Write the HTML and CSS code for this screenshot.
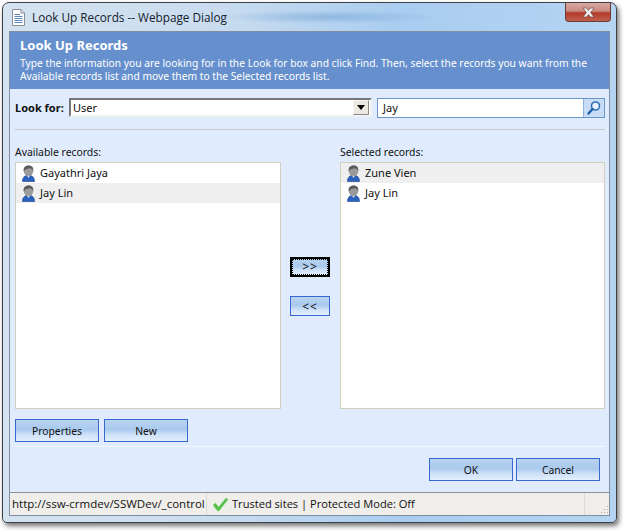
FILE: index.html
```html
<!DOCTYPE html>
<html>
<head>
    <title>Look Up Records -- Webpage Dialog</title>
    <link rel="stylesheet" href="styles.css">
</head>
<body>
    <div class="window">
        <div class="titlebar">
            <svg class="page-icon" width="15" height="17" viewBox="0 0 15 17">
                <path d="M1.5 .5H10L13.5 4V16.5H1.5Z" fill="#fff" stroke="#8a8f96"/>
                <path d="M10 .5V4H13.5" fill="#dfe4ea" stroke="#8a8f96"/>
                <path d="M3.5 5.5H9M3.5 7.5H11.5M3.5 9.5H11.5M3.5 11.5H11.5M3.5 13.5H11.5" stroke="#5f86bd"/>
            </svg>
            <span class="window-title">Look Up Records -- Webpage Dialog</span>
            <div class="close-btn">
                <svg width="13" height="11" viewBox="0 0 13 11">
                    <path d="M1 1H4.5L6.5 3.5L8.5 1H12L8.5 5.5L12 10H8.5L6.5 7.5L4.5 10H1L4.5 5.5Z" fill="#f4f4f4" stroke="#6b4a48" stroke-width=".7"/>
                </svg>
            </div>
        </div>

        <div class="content">
            <div class="header">
                <h1>Look Up Records</h1>
                <p>Type the information you are looking for in the Look for box and click Find. Then, select the records you want from the Available records list and move them to the Selected records list.</p>
            </div>

            <div class="main">
                <div class="search-row">
                    <label class="look-label">Look for:</label>
                    <div class="select-box">
                        <span>User</span>
                        <div class="select-arrow"></div>
                    </div>
                    <div class="find-box">
                        <span class="find-text">Jay</span>
                        <div class="find-btn">
                            <svg width="16" height="16" viewBox="0 0 16 16">
                                <circle cx="9.5" cy="6" r="4" fill="#e8f2fc" stroke="#2f6fb5" stroke-width="1.6"/>
                                <path d="M6.5 9L2.5 13.5" stroke="#1f5fa8" stroke-width="2.4" stroke-linecap="round"/>
                            </svg>
                        </div>
                    </div>
                </div>
                <div class="rule"></div>

                <div class="columns">
                    <div class="column">
                        <div class="list-label">Available records:</div>
                        <div class="list">
                            <div class="record">
                                <svg class="user-icon" width="15" height="17" viewBox="0 0 15 17"><use href="#user"/></svg>
                                <span>Gayathri Jaya</span>
                            </div>
                            <div class="record selected">
                                <svg class="user-icon" width="15" height="17" viewBox="0 0 15 17"><use href="#user"/></svg>
                                <span>Jay Lin</span>
                            </div>
                        </div>
                    </div>

                    <div class="move-btns">
                        <button class="btn move focused"><span>&gt;&gt;</span></button>
                        <button class="btn move">&lt;&lt;</button>
                    </div>

                    <div class="column right">
                        <div class="list-label">Selected records:</div>
                        <div class="list">
                            <div class="record selected">
                                <svg class="user-icon" width="15" height="17" viewBox="0 0 15 17"><use href="#user"/></svg>
                                <span>Zune Vien</span>
                            </div>
                            <div class="record">
                                <svg class="user-icon" width="15" height="17" viewBox="0 0 15 17"><use href="#user"/></svg>
                                <span>Jay Lin</span>
                            </div>
                        </div>
                    </div>
                </div>

                <div class="list-btns">
                    <button class="btn">Properties</button>
                    <button class="btn">New</button>
                </div>
            </div>

            <div class="footer">
                <button class="btn">OK</button>
                <button class="btn">Cancel</button>
            </div>

            <div class="statusbar">
                <div class="status-url">http://ssw-crmdev/SSWDev/_control</div>
                <div class="status-zone">
                    <svg width="17" height="15" viewBox="0 0 17 15">
                        <path d="M1 8L3.5 6L6.5 10L14 1L16 2.5L7 14H5.5Z" fill="#56c04a" stroke="#8bd882" stroke-width=".5"/>
                    </svg>
                    <span>Trusted sites | Protected Mode: Off</span>
                </div>
                <div class="status-grip">
                    <svg width="9" height="9" viewBox="0 0 9 9">
                        <path d="M7 1h1v1H7zM4 4h1v1H4zM7 4h1v1H7zM1 7h1v1H1zM4 7h1v1H4zM7 7h1v1H7z" fill="#a9a7a3"/>
                    </svg>
                </div>
            </div>
        </div>
    </div>

    <svg width="0" height="0" class="defs">
        <defs>
            <g id="user">
                <path d="M1.5 16.5C1.5 12.5 3.5 11 5.5 10.5L7.5 12.5L9.5 10.5C11.5 11 13.5 12.5 13.5 16.5Z" fill="#2a62c0" stroke="#1c3f86" stroke-width=".6"/>
                <path d="M6 10.5L7.5 13L9 10.5Z" fill="#dfe6f0"/>
                <ellipse cx="7.5" cy="5.8" rx="4.8" ry="5.2" fill="#9a9a9a"/>
                <path d="M2.7 6.5C2 2 5 .6 7.6 .6C10.5 .6 12.8 2.4 12.3 6C11.5 4 9.8 3.2 8 3.4C5.8 3.6 3.8 4.2 2.7 6.5Z" fill="#5a5a5a"/>
            </g>
        </defs>
    </svg>
</body>
</html>
```

FILE: styles.css
```css
* {
    box-sizing: border-box;
}

html, body {
    height: 531px;
    overflow: hidden;
}

body {
    margin: 0;
    padding: 2px 0 0 2px;
    background-color: #fff;
    font-family: "Noto Sans", Arial, sans-serif;
    font-size: 11px;
    color: #111;
}

.defs {
    display: block;
}

.window {
    width: 615px;
    height: 521px;
    padding: 0 6px 6px;
    border: 1px solid #3c4248;
    border-radius: 7px 7px 5px 5px;
    background: linear-gradient(90deg, #d5e3f0 0, #c9dcef 35%, #a9cdf0 65%, #b4d4f2 100%);
    box-shadow: 2px 3px 5px rgba(0, 0, 0, 0.55);
}

.titlebar {
    display: flex;
    height: 28px;
    background: radial-gradient(ellipse 110px 7px at 320px 14px, rgba(120, 165, 215, 0.6), rgba(120, 165, 215, 0));
}

.page-icon {
    margin: 6px 6px 0 2px;
}

.window-title {
    padding-top: 6px;
    font-family: "Open Sans", Arial, sans-serif;
    font-size: 11.75px;
    color: #14202c;
}

.close-btn {
    display: flex;
    align-items: center;
    justify-content: center;
    width: 46px;
    height: 19px;
    margin: 0 -1px 0 auto;
    border: 1px solid #6d3a36;
    border-top: none;
    border-radius: 0 0 4px 4px;
    background: linear-gradient(180deg, #d9a8a0 0, #c98a80 45%, #b23a28 55%, #c0604e 100%);
}

.content {
    display: flex;
    flex-direction: column;
    height: 485px;
    outline: 1px solid #7f8ea0;
    outline-offset: -1px;
    background-color: #e0ecfd;
}

.header {
    height: 58px;
    padding: 6px 11px 0;
    background-color: #6690cd;
    color: #fff;
}

.header h1 {
    margin: 0 0 4px;
    font-size: 13px;
    line-height: 16px;
}

.header p {
    margin: 0;
    font-size: 10.25px;
    line-height: 13px;
}

.main {
    height: 358px;
    margin: 0 5px 0 6px;
    border-bottom: 1px solid #f4f8fe;
    padding-top: 9px;
}

.search-row {
    display: flex;
    height: 20px;
}

.look-label {
    width: 54px;
    font-weight: bold;
    line-height: 20px;
}

.select-box {
    display: flex;
    align-items: center;
    justify-content: space-between;
    width: 303px;
    height: 19px;
    padding: 0 1px 0 2px;
    border: 2px solid #777;
    border-right-color: #f2f2f2;
    border-bottom-color: #f2f2f2;
    background-color: #fff;
}

.select-arrow {
    position: relative;
    width: 16px;
    height: 15px;
    border: 1px solid #8a8a8a;
    border-top-color: #f4f4f4;
    border-left-color: #f4f4f4;
    background-color: #ece9e0;
}

.select-arrow::after {
    content: "";
    position: absolute;
    top: 4px;
    left: 3px;
    border-top: 5px solid #000;
    border-left: 4px solid transparent;
    border-right: 4px solid transparent;
}

.find-box {
    display: flex;
    width: 228px;
    height: 20px;
    margin-left: 5px;
    border: 1px solid #6d96cf;
    background-color: #fff;
}

.find-text {
    flex: 1;
    padding-left: 5px;
    line-height: 18px;
}

.find-btn {
    display: flex;
    align-items: center;
    justify-content: center;
    width: 21px;
    border-left: 1px solid #8fb2e0;
    background-color: #c8dcf5;
}

.rule {
    height: 1px;
    margin-top: 11px;
    background-color: #c9c9c9;
}

.columns {
    display: flex;
    margin-top: 14px;
}

.column {
    flex: none;
    width: 266px;
}

.right {
    width: 265px;
}

.list-label {
    height: 18px;
    font-size: 10.4px;
    line-height: 17px;
}

.list {
    height: 247px;
    border: 1px solid #d3cfbd;
    background-color: #fff;
}

.record {
    display: flex;
    align-items: center;
    height: 20px;
    padding-left: 5px;
    line-height: 18px;
}

.record span {
    margin-left: 4px;
}

.selected {
    background-color: #efefef;
}

.move-btns {
    display: flex;
    flex: none;
    flex-direction: column;
    gap: 19px;
    width: 59px;
    padding: 113px 0 0 9px;
}

.btn {
    display: flex;
    align-items: center;
    justify-content: center;
    width: 84px;
    height: 23px;
    padding: 0;
    border: 1px solid #3768cf;
    background: linear-gradient(180deg, #bad3ef 0, #a8caee 45%, #cfe1f8 70%, #e2eefd 100%);
    font-family: inherit;
    font-size: 10.3px;
    color: #111;
}

.move {
    width: 40px;
    height: 20px;
    font-size: 12px;
    letter-spacing: 1px;
}

.focused {
    border: 2px solid #000;
}

.focused span {
    width: 100%;
    height: 100%;
    line-height: 14px;
    border: 1px dotted #000;
}

.list-btns {
    display: flex;
    gap: 5px;
    margin-top: 10px;
}

.footer {
    display: flex;
    justify-content: flex-end;
    gap: 3px;
    height: 45px;
    padding: 11px 10px 0 0;
}

.statusbar {
    display: flex;
    height: 24px;
    border-top: 1px solid #8f8f8f;
    border-bottom: 1px solid #555;
    background-color: #f0eeeb;
    font-family: "Open Sans", Arial, sans-serif;
    font-size: 11.1px;
    line-height: 22px;
}

.status-url {
    width: 198px;
    padding-left: 3px;
    border-right: 1px solid #dcdad6;
    font-size: 11.5px;
    white-space: nowrap;
}

.status-zone {
    display: flex;
    align-items: center;
    gap: 3px;
    width: 378px;
    padding-left: 5px;
    border-right: 1px solid #dcdad6;
}

.status-grip {
    display: flex;
    flex: 1;
    align-items: flex-end;
    justify-content: flex-end;
    padding: 0 1px 1px 0;
}
```
